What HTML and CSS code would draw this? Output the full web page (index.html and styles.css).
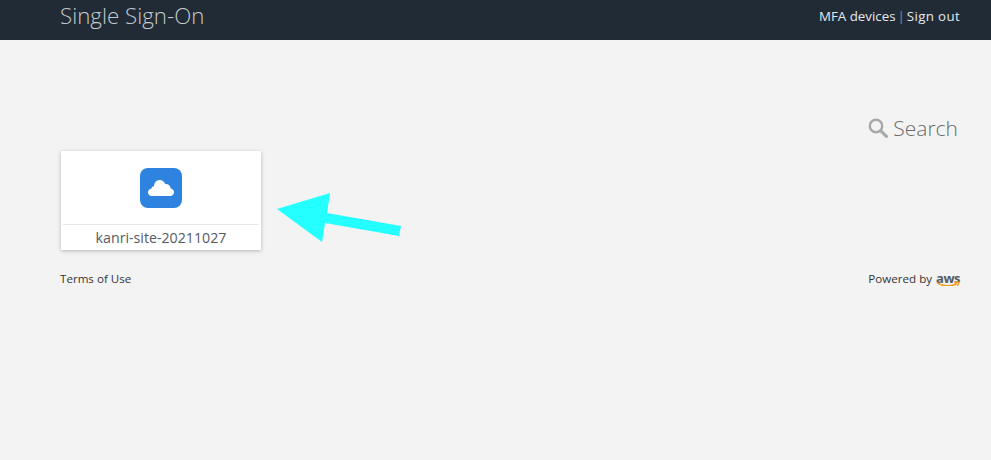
FILE: index.html
```html
<!DOCTYPE html>
<html lang="en">
<head>
<meta charset="UTF-8">
<title>Single Sign-On</title>
<link rel="stylesheet" href="styles.css">
</head>
<body>

<header class="navbar">
    <span class="brand">Single Sign-On</span>
    <nav class="user-links">
        <a href="#">MFA devices</a>
        <span class="sep">|</span>
        <a class="sign-out" href="#">Sign out</a>
    </nav>
</header>

<main>
    <div class="search">
        <svg class="search-icon" viewBox="0 0 20 20" width="20" height="20">
            <circle cx="8" cy="8" r="6.2" fill="none" stroke="#a8a8a8" stroke-width="2.4"/>
            <path d="M12.6 12.6L18.4 18.4" stroke="#a8a8a8" stroke-width="3" stroke-linecap="round"/>
        </svg>
        <span>Search</span>
    </div>

    <section class="apps">
        <a class="app-card" href="#">
            <div class="app-icon-wrap">
                <svg class="app-icon" viewBox="0 0 42 40" width="42" height="40">
                    <rect width="42" height="40" rx="8" fill="#2e83e0"/>
                    <path d="M12 28c-2.500 0-4-1.800-4-3.800 0-2 1.500-3.600 3.500-3.800 .2-1.300 1.200-2.200 2.500-2.200 .2-3.300 2.300-6.200 5.800-6.200 2.700 0 4.600 1.700 5.400 4 3-.3 5.300 1.700 5.500 4.500 2 .4 3.300 2 3.300 3.800 0 2-1.500 3.700-4 3.700z" fill="#fff"/>
                </svg>
            </div>
            <div class="app-name">kanri-site-20211027</div>
        </a>
        <!-- annotation arrow drawn over the page -->
        <svg class="arrow" viewBox="0 0 130 54" width="130" height="54">
            <polygon points="0,16 53,0 50,20 124,33 122,43 48,30 45,49" fill="#24ffff"/>
        </svg>
    </section>

    <footer class="page-footer">
        <a href="#">Terms of Use</a>
        <div class="powered">
            <span>Powered by</span>
            <span class="aws">aws
                <svg class="smile" viewBox="0 0 24 7" width="24" height="7">
                    <path d="M1 1.500C6 5.500 15 6 21 2.500" fill="none" stroke="#f29b1d" stroke-width="1.600"/>
                    <path d="M18.500 1.500L23 1.200L21.500 5" fill="none" stroke="#f29b1d" stroke-width="1.300"/>
                </svg>
            </span>
        </div>
    </footer>
</main>

</body>
</html>
```
FILE: styles.css
```css
body {
    margin: 0;
    background-color: #f3f3f3;
    color: #333;
    font-family: 'Open Sans', 'Noto Sans', sans-serif;
}

a {
    color: inherit;
    text-decoration: none;
}

.navbar {
    height: 40px;
    background-color: #212b36;
    display: flex;
    justify-content: space-between;
    align-items: flex-start;
    padding: 0 31px 0 60px;
}

.brand {
    font-size: 22.3px;
    font-weight: 300;
    line-height: 31px;
    color: #c4cace;
}

.user-links {
    display: flex;
    font-size: 13.3px;
    line-height: 32px;
    color: #e6e8ea;
}

.sep {
    margin: 0 2px;
    color: #87909a;
}

.sign-out {
    letter-spacing: 0.35px;
}

main {
    padding: 0 31px 0 60px;
}

.search {
    display: flex;
    justify-content: flex-end;
    align-items: center;
    gap: 5px;
    height: 30px;
    margin-top: 73px;
    padding-right: 2px;
    font-size: 21px;
    font-weight: 300;
    color: #6b6b6b;
}

.apps {
    position: relative;
    margin-top: 8px;
}

.app-card {
    display: block;
    box-sizing: border-box;
    width: 200px;
    height: 99px;
    margin-left: 1px;
    padding: 0 2px;
    background-color: #fff;
    box-shadow: 0 1px 4px rgba(0, 0, 0, 0.25);
}

.app-icon-wrap {
    display: flex;
    justify-content: center;
    height: 74px;
    padding-top: 17px;
    box-sizing: border-box;
    border-bottom: 1px solid #e8e8e8;
}

.app-name {
    text-align: center;
    font-size: 14.2px;
    line-height: 26px;
    color: #555b64;
}

.arrow {
    position: absolute;
    left: 217px;
    top: 42px;
}

.page-footer {
    display: flex;
    justify-content: space-between;
    align-items: center;
    margin-top: 20px;
    font-size: 11.6px;
    color: #333;
}

.powered {
    display: flex;
    align-items: center;
    gap: 4px;
}

.aws {
    position: relative;
    font-weight: 700;
    font-size: 13px;
    line-height: 16px;
    letter-spacing: -0.5px;
    color: #555b64;
}

.smile {
    position: absolute;
    left: 0;
    top: 11px;
}
```
